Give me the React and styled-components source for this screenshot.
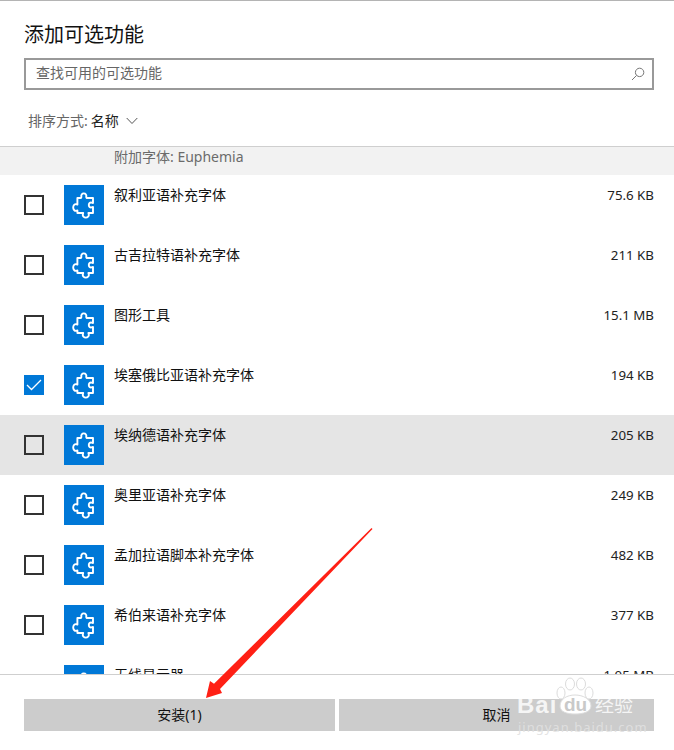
import React from "react"
import styled, { createGlobalStyle } from "styled-components"

const GlobalStyle = createGlobalStyle`
  html, body {
    margin: 0;
    padding: 0;
    background: #fff;
  }
  body {
    font-family: "Noto Sans", "Noto Sans CJK SC", sans-serif;
    color: #111;
  }
`

const Dialog = styled.div`
  position: relative;
  width: 674px;
  height: 750px;
  display: flex;
  flex-direction: column;
  overflow: hidden;
  border-top: 1px solid #b4b4b4;
  box-sizing: border-box;
  background: #fff;
`

const Header = styled.header`
  height: 145px;
  flex: none;
  padding: 0 20px 0 24px;
  display: flex;
  flex-direction: column;
  border-bottom: 1px solid #cfcfcf;
`

const Title = styled.h1`
  margin: 20px 0 0;
  height: 28px;
  font-size: 20px;
  font-weight: 400;
  line-height: 28px;
  color: #111;
`

const SearchBox = styled.div`
  margin-top: 9px;
  height: 32px;
  box-sizing: border-box;
  border: 2px solid #999;
  display: flex;
  align-items: center;
  justify-content: space-between;
  padding: 0 7px 0 10px;
  font-size: 14px;
  line-height: 24px;
  color: #666;
`

const Placeholder = styled.span`
  margin-top: -3px;
`

const SortRow = styled.div`
  margin: 21px 0 0 4px;
  height: 20px;
  display: flex;
  align-items: center;
  font-size: 14px;
  line-height: 20px;
  color: #666;
`

const SortValue = styled.span`
  margin-left: 3px;
  color: #222;
`

const Chevron = styled.svg`
  margin-left: 7px;
  width: 12px;
  height: 8px;
`

const List = styled.div`
  flex: 1;
  min-height: 0;
  overflow: hidden;
`

const GroupStrip = styled.div`
  height: 28px;
  box-sizing: border-box;
  padding: 0 0 0 114px;
  background: #f2f2f2;
  font-size: 14px;
  line-height: 20px;
  color: #6b6b6b;
`

const Row = styled.div`
  height: 60px;
  flex: none;
  box-sizing: border-box;
  padding: 10px 20px 0 24px;
  display: flex;
  align-items: flex-start;
  background: ${(p) => (p.$hover ? "#e5e5e5" : "#fff")};
`

const CheckBox = styled.div`
  width: 20px;
  height: 20px;
  margin-top: 10px;
  box-sizing: border-box;
  flex: none;
  display: flex;
  align-items: center;
  justify-content: center;
  border: ${(p) => (p.$checked ? "none" : "2px solid #333")};
  background: ${(p) => (p.$checked ? "#0078d7" : "transparent")};
`

const IconTile = styled.div`
  width: 40px;
  height: 40px;
  flex: none;
  margin-left: 20px;
  background: #0078d7;
  display: flex;
`

const RowName = styled.div`
  margin-left: 10px;
  flex: 1;
  font-size: 14px;
  line-height: 20px;
`

const RowSize = styled.div`
  font-size: 13.3px;
  line-height: 20px;
  color: #222;
`

const Footer = styled.footer`
  height: 76px;
  flex: none;
  box-sizing: border-box;
  border-top: 1px solid #cfcfcf;
  padding: 24px 20px 0 24px;
  display: flex;
  gap: 4px;
  background: #fff;
`

const FooterButton = styled.button`
  width: ${(p) => p.$width}px;
  height: 32px;
  border: none;
  padding: 0 0 3px;
  background: #ccc;
  font-family: inherit;
  font-size: 14px;
  color: #111;
`

const Arrow = styled.svg`
  position: absolute;
  left: 190px;
  top: 510px;
  width: 200px;
  height: 200px;
  pointer-events: none;
`

const Watermark = styled.div`
  position: absolute;
  left: 515px;
  top: 676px;
  width: 125px;
  height: 62px;
  color: rgba(255, 255, 255, 0.82);
  pointer-events: none;
`

const PawIcon = styled.svg`
  position: absolute;
  left: 41px;
  top: 0;
  width: 38px;
  height: 40px;
`

const MarkBrand = styled.div`
  position: absolute;
  left: 2px;
  top: 14px;
  font-family: "Liberation Sans", sans-serif;
  font-size: 24px;
  font-weight: 700;
  line-height: 28px;
  letter-spacing: 1px;
`

const MarkDu = styled.div`
  position: absolute;
  left: 49px;
  top: 17px;
  font-family: "Liberation Sans", sans-serif;
  font-size: 19px;
  font-weight: 700;
  line-height: 22px;
  color: #c9c9c9;
`

const MarkCn = styled.div`
  position: absolute;
  left: 80px;
  top: 15px;
  font-size: 19px;
  line-height: 26px;
  white-space: nowrap;
`

const MarkUrl = styled.div`
  position: absolute;
  left: 3px;
  top: 41px;
  font-size: 13px;
  line-height: 18px;
  letter-spacing: 1px;
  white-space: nowrap;
  color: rgba(225, 225, 225, 0.9);
`

const rows = [
  { name: "叙利亚语补充字体", size: "75.6 KB" },
  { name: "古吉拉特语补充字体", size: "211 KB" },
  { name: "图形工具", size: "15.1 MB" },
  { name: "埃塞俄比亚语补充字体", size: "194 KB", checked: true },
  { name: "埃纳德语补充字体", size: "205 KB", hover: true },
  { name: "奥里亚语补充字体", size: "249 KB" },
  { name: "孟加拉语脚本补充字体", size: "482 KB" },
  { name: "希伯来语补充字体", size: "377 KB" },
  { name: "无线显示器", size: "1.05 MB" },
]

const Puzzle = () => (
  <svg width="40" height="40" viewBox="0 0 40 40" fill="none">
    <path
      d="M17 13 L17.4 12 C16.8 10 18 8.4 19.8 8.4 C21.6 8.4 22.8 10 22.2 12 L22.6 13 L29 13 L29 18 L27.6 17.6 C26 17.2 24.8 18.4 24.8 20 C24.8 21.6 26 22.8 27.6 22.4 L29 22 L29 28 L24.4 28 L24.8 29.4 C25.2 31.2 23.6 32.6 21.8 32.6 C20 32.6 18.4 31.2 18.8 29.4 L19.2 28 L13.4 28 L13.4 25.4 L12.4 25.8 C10.6 26.2 9.2 24.4 9.2 22.4 C9.2 20.4 10.6 18.8 12.4 19.2 L13.4 19.6 L13.4 13 Z"
      stroke="#fff"
      strokeWidth="1.9"
      strokeLinejoin="round"
    />
  </svg>
)

const App = () => {
  return (
    <Dialog>
      <GlobalStyle />
      <Header>
        <Title>添加可选功能</Title>
        <SearchBox>
          <Placeholder>查找可用的可选功能</Placeholder>
          <svg width="14" height="14" viewBox="0 0 14 14" fill="none" stroke="#777" strokeWidth="1">
            <circle cx="8.6" cy="5.4" r="4.2" />
            <path d="M5.6 8.4 L1 13" />
          </svg>
        </SearchBox>
        <SortRow>
          排序方式:<SortValue>名称</SortValue>
          <Chevron viewBox="0 0 12 8" fill="none" stroke="#555" strokeWidth="1">
            <path d="M0.7 1 L6 6.5 L11.3 1" />
          </Chevron>
        </SortRow>
      </Header>
      <List>
        <GroupStrip>附加字体: Euphemia</GroupStrip>
        {rows.map((row) => (
          <Row key={row.name} $hover={row.hover}>
            <CheckBox $checked={row.checked}>
              {row.checked && (
                <svg width="16" height="12" viewBox="0 0 16 12" fill="none" stroke="#fff" strokeWidth="1.3">
                  <path d="M1 6 L5.5 10.5 L15 1" />
                </svg>
              )}
            </CheckBox>
            <IconTile>
              <Puzzle />
            </IconTile>
            <RowName>{row.name}</RowName>
            <RowSize>{row.size}</RowSize>
          </Row>
        ))}
      </List>
      <Footer>
        <FooterButton $width={311}>安装(1)</FooterButton>
        <FooterButton $width={315}>取消</FooterButton>
      </Footer>
      <Arrow viewBox="0 0 200 200">
        <path d="M181.500 17 L182.500 18 L30 178 L32 182 L16 187 L20 170 L24 172.700 Z" fill="#ff2015" />
      </Arrow>
      <Watermark>
        <PawIcon viewBox="0 0 38 40" fill="none" stroke="#dcdcdc" strokeWidth="1">
          <ellipse cx="5" cy="16" rx="4" ry="6" fill="#fff" />
          <ellipse cx="14" cy="7" rx="4.500" ry="6" fill="#fff" />
          <ellipse cx="25" cy="7" rx="4.500" ry="6" fill="#fff" />
          <ellipse cx="33" cy="16" rx="4" ry="6" fill="#fff" />
          <path d="M4 29 C4 22 11 18 19 18 C27 18 35 22 35 29 C35 35 27 37 19 37 C11 37 4 35 4 29 Z" fill="#fff" />
        </PawIcon>
        <MarkBrand>Bai</MarkBrand>
        <MarkDu>du</MarkDu>
        <MarkCn>经验</MarkCn>
        <MarkUrl>jingyan.baidu.com</MarkUrl>
      </Watermark>
    </Dialog>
  )
}

export default App
